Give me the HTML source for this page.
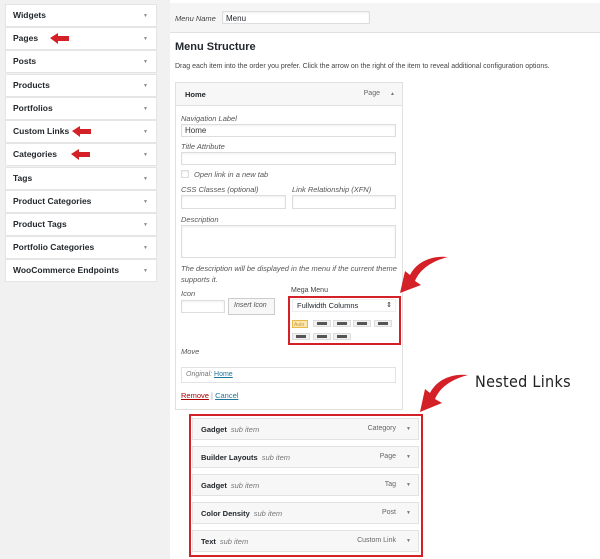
<!DOCTYPE html>
<html><head><style>
*{box-sizing:border-box;margin:0;padding:0}
body{width:600px;height:559px;background:#f1f1f1;font-family:"Liberation Sans",sans-serif;color:#23282d;position:relative;overflow:hidden;font-size:8px}
.a{position:absolute}
.li{position:absolute;left:5px;width:152px;height:23px;background:#fff;border:1px solid #e5e5e5;font-weight:bold;font-size:8.5px;padding:5px 0 0 7px}
.li:after{content:"▼";position:absolute;right:8px;top:8px;font-size:5px;color:#888}
.inp{position:absolute;background:#fff;border:1px solid #ddd;box-shadow:inset 0 1px 2px rgba(0,0,0,.07)}
.lab{position:absolute;font-style:italic;color:#555;font-size:7.5px}
.sub{position:absolute;left:192px;width:227px;height:22px;background:#f7f7f7;border:1px solid #e2e2e2;font-size:7.5px;padding:6px 0 0 8px;font-weight:bold}
.sub i{font-weight:normal;color:#777;margin-left:4px}
.sub span{position:absolute;right:22px;top:6px;font-weight:normal;color:#666;font-size:7px}
.sub:after{content:"▼";position:absolute;right:7px;top:7px;font-size:5px;color:#777}
.cb{position:absolute;width:18px;height:7px;background:#f1f1f1;border:1px solid #ddd}
.cb:after{content:"";position:absolute;left:3px;top:1px;width:10px;height:3px;background:#555}
</style></head><body>
<div class="li" style="top:4px">Widgets</div>
<div class="li" style="top:27px">Pages</div>
<div class="li" style="top:50px">Posts</div>
<div class="li" style="top:74px">Products</div>
<div class="li" style="top:97px">Portfolios</div>
<div class="li" style="top:120px">Custom Links</div>
<div class="li" style="top:143px">Categories</div>
<div class="li" style="top:167px">Tags</div>
<div class="li" style="top:190px">Product Categories</div>
<div class="li" style="top:213px">Product Tags</div>
<div class="li" style="top:236px">Portfolio Categories</div>
<div class="li" style="top:259px">WooCommerce Endpoints</div>
<svg class="a" style="left:0;top:0" width="160" height="290"><g fill="#d42027">
<path d="M50 38 L58 33 L58 36 L69 36 L69 41 L58 41 L58 44Z"/>
<path d="M72 131 L80 126 L80 129 L91 129 L91 134 L80 134 L80 137Z"/>
<path d="M71 154 L79 149 L79 152 L90 152 L90 157 L79 157 L79 160Z"/></g></svg>

<div class="a" style="left:170px;top:0;width:430px;height:559px;background:#fff"></div>
<div class="a" style="left:170px;top:3px;width:430px;height:30px;background:#f5f5f5;border-bottom:1px solid #e0e0e0"></div>
<div class="lab" style="left:175px;top:14px;color:#444">Menu Name</div>
<div class="inp" style="left:222px;top:11px;width:148px;height:13px;font-size:8px;padding:2px 3px">Menu</div>
<div class="a" style="left:175px;top:41px;font-size:11px;font-weight:bold">Menu Structure</div>
<div class="a" style="left:175px;top:63px;font-size:7px;color:#444">Drag each item into the order you prefer. Click the arrow on the right of the item to reveal additional configuration options.</div>

<div class="a" style="left:175px;top:82px;width:228px;height:328px;background:#fff;border:1px solid #e0e0e0"></div>
<div class="a" style="left:175px;top:82px;width:228px;height:24px;background:#f7f7f7;border:1px solid #e0e0e0;font-weight:bold;font-size:7.5px;padding:7px 0 0 9px">Home<span style="position:absolute;right:22px;top:7px;font-weight:normal;color:#666;font-size:7px">Page</span><span style="position:absolute;right:7px;top:8px;font-size:5px;color:#777">▲</span></div>
<div class="lab" style="left:181px;top:114px">Navigation Label</div>
<div class="inp" style="left:181px;top:124px;width:215px;height:13px;font-size:8px;padding:1px 3px;color:#333">Home</div>
<div class="lab" style="left:181px;top:142px">Title Attribute</div>
<div class="inp" style="left:181px;top:152px;width:215px;height:13px"></div>
<div class="inp" style="left:181px;top:170px;width:8px;height:8px"></div>
<div class="lab" style="left:194px;top:170px">Open link in a new tab</div>
<div class="lab" style="left:181px;top:185px">CSS Classes (optional)</div>
<div class="lab" style="left:292px;top:185px">Link Relationship (XFN)</div>
<div class="inp" style="left:181px;top:195px;width:105px;height:14px"></div>
<div class="inp" style="left:292px;top:195px;width:104px;height:14px"></div>
<div class="lab" style="left:181px;top:215px">Description</div>
<div class="inp" style="left:181px;top:225px;width:215px;height:33px"></div>
<div class="lab" style="left:181px;top:263px;line-height:11px;width:220px">The description will be displayed in the menu if the current theme supports it.</div>
<div class="lab" style="left:181px;top:289px">Icon</div>
<div class="inp" style="left:181px;top:300px;width:44px;height:13px"></div>
<div class="a" style="left:228px;top:298px;width:47px;height:17px;background:#f7f7f7;border:1px solid #ccc;font-style:italic;font-size:7px;color:#555;padding:3px 0 0 5px">Insert Icon</div>
<div class="a" style="left:291px;top:287px;font-size:7px;color:#444">Mega Menu</div>
<div class="a" style="left:288px;top:296px;width:113px;height:49px;border:2px solid #d42027"></div>
<div class="a" style="left:292px;top:299px;width:104px;height:13px;background:#fff;border:1px solid #eee;font-size:7.5px;padding:1px 4px">Fullwidth Columns<span style="position:absolute;right:3px;top:1px;font-size:7px">⇕</span></div>
<div class="a" style="left:292px;top:320px;width:16px;height:8px;background:#fde7b0;border:1px solid #e8b84a;font-size:5px;color:#c8963a;padding:1px">Auto</div>
<div class="cb" style="left:313px;top:320px"></div><div class="cb" style="left:333px;top:320px"></div><div class="cb" style="left:353px;top:320px"></div><div class="cb" style="left:374px;top:320px"></div>
<div class="cb" style="left:292px;top:333px"></div><div class="cb" style="left:313px;top:333px"></div><div class="cb" style="left:333px;top:333px"></div>
<div class="lab" style="left:181px;top:347px">Move</div>
<div class="a" style="left:181px;top:367px;width:215px;height:16px;border:1px solid #e2e2e2;font-size:7px;padding:3px 4px"><i style="color:#777">Original:</i> <u style="color:#21759b">Home</u></div>
<div class="a" style="left:181px;top:391px;font-size:7.5px;color:#999"><u style="color:#a00">Remove</u> | <u style="color:#21759b">Cancel</u></div>

<div class="a" style="left:189px;top:414px;width:234px;height:143px;border:2px solid #d42027"></div>
<div class="sub" style="top:418px">Gadget<i>sub item</i><span>Category</span></div>
<div class="sub" style="top:446px">Builder Layouts<i>sub item</i><span>Page</span></div>
<div class="sub" style="top:474px">Gadget<i>sub item</i><span>Tag</span></div>
<div class="sub" style="top:502px">Color Density<i>sub item</i><span>Post</span></div>
<div class="sub" style="top:530px">Text<i>sub item</i><span>Custom Link</span></div>

<div class="a" style="left:475px;top:372px;font-family:'DejaVu Sans Condensed','DejaVu Sans',sans-serif;font-size:16px;color:#222;letter-spacing:0.3px">Nested Links</div>
<svg class="a" style="left:390px;top:245px" width="100" height="180"><g fill="#d42027">
<path d="M58 12 C40 10 26 18 20 30 L15 26 L10 48 L31 40 L25 36 C30 24 42 16 58 12Z"/>
<path d="M78 130 C60 128 46 136 40 148 L35 144 L30 167 L52 158 L45 154 C50 142 62 134 78 130Z"/></g></svg>
</body></html>
